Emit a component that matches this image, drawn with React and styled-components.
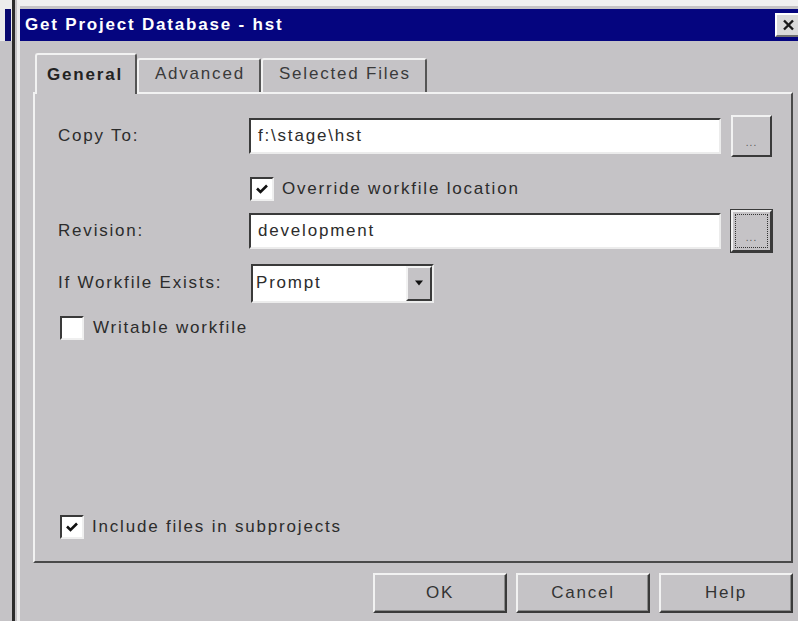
import React from "react";
import styled, { createGlobalStyle } from "styled-components";

const FACE = "#c5c3c6";
const LIGHT = "#f2f2f2";
const DARK = "#3a3a3a";
const INK = "#2c2c2c";

const GlobalStyle = createGlobalStyle`
  html, body { margin: 0; padding: 0; background: ${FACE}; }
  body { font-family: "Liberation Sans", Arial, sans-serif; }
  * { box-sizing: border-box; }
`;

const Screen = styled.div`
  display: flex;
  width: 798px;
  height: 621px;
  overflow: hidden;
  background: ${FACE};
  font-size: 17px;
  letter-spacing: 1.8px;
  color: ${INK};
`;

/* sliver of the window lying behind the dialog */
const BackWindow = styled.div`
  flex: none;
  width: 12px;
  padding: 9px 1px 0 5px;
  background: linear-gradient(#ececec 0 41px, ${FACE} 41px);
`;

const BackTitle = styled.div`
  height: 32px;
  background: #0a0a70;
`;

const Window = styled.div`
  flex: 1;
  display: flex;
  border-left: 3px solid #2b2b2b;
  padding-left: 2px;
  min-width: 0;
`;

const Frame = styled.div`
  flex: 1;
  display: flex;
  flex-direction: column;
  border-left: 3px solid #ececec;
  border-top: 6px solid #f0f0f0;
  padding-top: 3px;
  min-width: 0;
`;

const TitleBar = styled.div`
  flex: none;
  height: 32px;
  display: flex;
  align-items: center;
  justify-content: space-between;
  background: #05057f;
  padding-left: 5px;
  color: #ffffff;
  font-weight: bold;
`;

const CloseButton = styled.div`
  flex: none;
  width: 28px;
  height: 24px;
  margin-right: -5px;
  display: flex;
  align-items: center;
  justify-content: center;
  background: #dadada;
  border-top: 2px solid #ffffff;
  border-left: 2px solid #ffffff;
  border-bottom: 2px solid #707070;
  padding-right: 3px;
`;

const Body = styled.div`
  flex: 1;
  display: flex;
  flex-direction: column;
  padding: 12px 5px 0 13px;
`;

const TabRow = styled.div`
  display: flex;
  align-items: flex-end;
  height: 41px;
  margin-left: 2px;
  margin-bottom: -2px;
  position: relative;
  z-index: 1;
`;

const Tab = styled.div`
  display: flex;
  align-items: center;
  height: ${(p) => (p.$active ? "41px" : "34px")};
  margin-bottom: ${(p) => (p.$active ? "0" : "2px")};
  padding: ${(p) => (p.$active ? "0 12px 0 10px" : "0 14px 4px 16px")};
  background: ${FACE};
  border-top: 2px solid ${LIGHT};
  border-left: 2px solid ${LIGHT};
  border-right: 2px solid #555555;
  border-radius: 3px 3px 0 0;
  font-weight: ${(p) => (p.$active ? "bold" : "normal")};
  color: ${(p) => (p.$active ? "#222" : "#3a3a3a")};
`;

const Panel = styled.div`
  height: 471px;
  display: flex;
  flex-direction: column;
  border-top: 2px solid ${LIGHT};
  border-left: 2px solid ${LIGHT};
  border-right: 2px solid #4a4a4a;
  border-bottom: 2px solid #4a4a4a;
  padding: 0 19px 21px 23px;
`;

const FieldRow = styled.div`
  display: grid;
  grid-template-columns: 181px 1fr 41px;
  column-gap: 10px;
  align-items: center;
  height: ${(p) => p.$h}px;
  margin-top: ${(p) => p.$top}px;
`;

const Label = styled.span`
  white-space: nowrap;
`;

const TextBox = styled.div`
  height: 36px;
  display: flex;
  align-items: center;
  padding-left: 7px;
  background: #ffffff;
  border-top: 2px solid ${DARK};
  border-left: 2px solid ${DARK};
  border-bottom: 2px solid #ececec;
  border-right: 2px solid #ececec;
  white-space: nowrap;
`;

const BrowseButton = styled.div`
  width: 41px;
  height: 42px;
  display: flex;
  padding: 2px;
  background: ${FACE};
  border-top: 2px solid ${LIGHT};
  border-left: 2px solid ${LIGHT};
  border-bottom: 2px solid ${DARK};
  border-right: 2px solid ${DARK};
  outline: ${(p) => (p.$focused ? `1px solid ${DARK}` : "none")};
`;

const FocusRing = styled.div`
  flex: 1;
  display: flex;
  align-items: flex-end;
  justify-content: center;
  padding-bottom: 4px;
  border: 1px dotted ${(p) => (p.$focused ? "#333" : "transparent")};
  font-size: 10px;
  letter-spacing: 1px;
  color: #555;
`;

const CheckRow = styled.label`
  display: flex;
  align-items: center;
  gap: ${(p) => p.$gap}px;
  height: ${(p) => p.$h}px;
  margin-top: ${(p) => p.$top}px;
  margin-left: ${(p) => p.$left || 0}px;
  white-space: nowrap;
`;

const CheckBox = styled.span`
  flex: none;
  width: 24px;
  height: 24px;
  display: flex;
  align-items: center;
  justify-content: center;
  background: #ffffff;
  border-top: 2px solid ${DARK};
  border-left: 2px solid ${DARK};
  border-bottom: 2px solid #efefef;
  border-right: 2px solid #efefef;
`;

const Select = styled.div`
  width: 183px;
  height: 39px;
  margin-left: 2px;
  display: flex;
  background: #ffffff;
  border-top: 2px solid ${DARK};
  border-left: 2px solid ${DARK};
  border-bottom: 2px solid #ececec;
  border-right: 2px solid #ececec;
`;

const SelectValue = styled.span`
  flex: 1;
  display: flex;
  align-items: center;
  padding-left: 3px;
`;

const ArrowButton = styled.span`
  flex: none;
  width: 26px;
  display: flex;
  align-items: center;
  justify-content: center;
  background: ${FACE};
  border-top: 2px solid ${LIGHT};
  border-left: 2px solid ${LIGHT};
  border-bottom: 2px solid ${DARK};
  border-right: 2px solid ${DARK};
`;

const Spacer = styled.div`
  flex: 1;
`;

const Actions = styled.div`
  display: flex;
  justify-content: flex-end;
  gap: 9px;
  margin-top: 10px;
`;

const PushButton = styled.div`
  width: 134px;
  height: 40px;
  display: flex;
  align-items: center;
  justify-content: center;
  background: ${FACE};
  border-top: 2px solid ${LIGHT};
  border-left: 2px solid ${LIGHT};
  border-bottom: 2px solid ${DARK};
  border-right: 2px solid ${DARK};
  box-shadow: inset -1px -1px #8a8a8a;
  color: #333;
`;

const Tick = () => (
  <svg width="16" height="14" viewBox="0 0 16 14">
    <path d="M3 6.5 L6.5 10 L13 3.5" fill="none" stroke="#111" strokeWidth="2.6" />
  </svg>
);

const CloseGlyph = () => (
  <svg width="13" height="12" viewBox="0 0 13 12">
    <path d="M2 1.5 L11 10.5 M11 1.5 L2 10.5" stroke="#1a1a1a" strokeWidth="2.4" />
  </svg>
);

const DownArrow = () => (
  <svg width="10" height="6" viewBox="0 0 10 6">
    <path d="M1 0.5 H9 L5 5.5 Z" fill="#111" />
  </svg>
);

const Check = ({ checked, children, ...rest }) => (
  <CheckRow {...rest}>
    <CheckBox>{checked && <Tick />}</CheckBox>
    <span>{children}</span>
  </CheckRow>
);

export default function App() {
  return (
    <>
      <GlobalStyle />
      <Screen>
        <BackWindow>
          <BackTitle />
        </BackWindow>
        <Window>
          <Frame>
            <TitleBar>
              <span>Get Project Database - hst</span>
              <CloseButton>
                <CloseGlyph />
              </CloseButton>
            </TitleBar>
            <Body>
              <TabRow>
                <Tab $active>General</Tab>
                <Tab>Advanced</Tab>
                <Tab>Selected Files</Tab>
              </TabRow>
              <Panel>
                <FieldRow $h={42} $top={21}>
                  <Label>Copy To:</Label>
                  <TextBox>f:\stage\hst</TextBox>
                  <BrowseButton>
                    <FocusRing>...</FocusRing>
                  </BrowseButton>
                </FieldRow>
                <Check checked $h={24} $top={20} $gap={8} $left={192}>
                  Override workfile location
                </Check>
                <FieldRow $h={42} $top={9}>
                  <Label>Revision:</Label>
                  <TextBox>development</TextBox>
                  <BrowseButton $focused>
                    <FocusRing $focused>...</FocusRing>
                  </BrowseButton>
                </FieldRow>
                <FieldRow $h={40} $top={11}>
                  <Label>If Workfile Exists:</Label>
                  <Select>
                    <SelectValue>Prompt</SelectValue>
                    <ArrowButton>
                      <DownArrow />
                    </ArrowButton>
                  </Select>
                </FieldRow>
                <Check $h={24} $top={13} $gap={9} $left={2}>
                  Writable workfile
                </Check>
                <Spacer />
                <Check checked $h={26} $top={0} $gap={8} $left={2}>
                  Include files in subprojects
                </Check>
              </Panel>
              <Actions>
                <PushButton>OK</PushButton>
                <PushButton>Cancel</PushButton>
                <PushButton>Help</PushButton>
              </Actions>
            </Body>
          </Frame>
        </Window>
      </Screen>
    </>
  );
}
